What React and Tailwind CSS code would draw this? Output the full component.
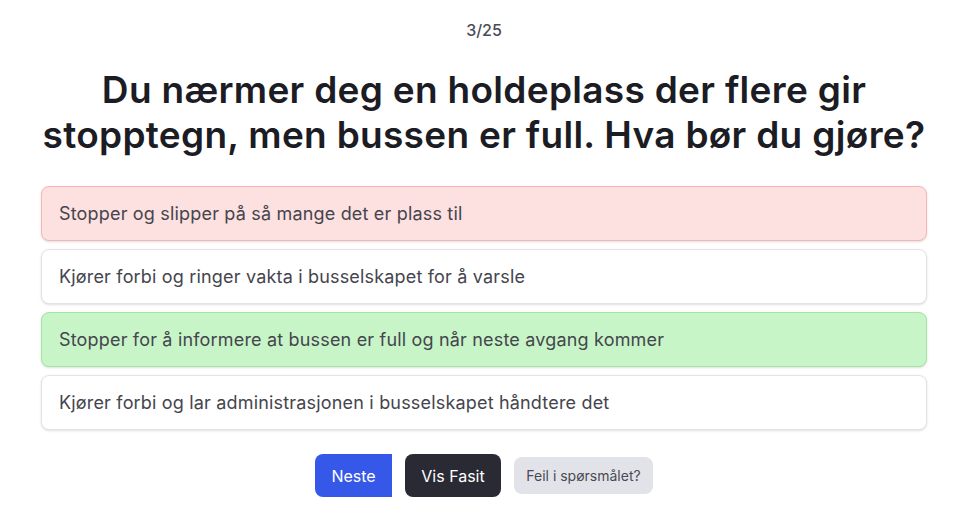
const options = [
  { text: 'Stopper og slipper på så mange det er plass til', state: 'wrong' },
  { text: 'Kjører forbi og ringer vakta i busselskapet for å varsle', state: 'none' },
  { text: 'Stopper for å informere at bussen er full og når neste avgang kommer', state: 'right' },
  { text: 'Kjører forbi og lar administrasjonen i busselskapet håndtere det', state: 'none' },
];

const stateClass = {
  wrong: 'bg-[#fde0e0] border-[#f9b4b4]',
  right: 'bg-[#c7f5c7] border-[#a3e4a3]',
  none: 'bg-white border-[#e4e4e7]',
};

export default function App() {
  return (
    <div className="min-h-screen bg-white font-['Inter',sans-serif]">
      <div className="w-[886px] mx-auto pt-[18px] flex flex-col items-center">
        <div className="text-base leading-6 font-medium text-[#4a4a58]">3/25</div>
        <h1 className="mt-[25px] text-center text-[37px] leading-[45px] font-semibold text-[#1c1c24] tracking-[0.3px] whitespace-nowrap">
          Du nærmer deg en holdeplass der flere gir<br />stopptegn, men bussen er full. Hva bør du gjøre?
        </h1>
        <div className="mt-[29px] w-full flex flex-col gap-2">
          {options.map((o) => (
            <div
              key={o.text}
              className={`h-[55px] flex items-center px-[17px] rounded-lg border shadow-sm text-lg tracking-[0.18px] text-[#45454d] ${stateClass[o.state]}`}
            >
              {o.text}
            </div>
          ))}
        </div>
        <div className="mt-6 flex items-center">
          <button className="h-[43px] w-[77px] rounded-l-lg bg-[#3558e8] text-white text-base">Neste</button>
          <button className="ml-[13px] h-[43px] w-[96px] rounded-lg bg-[#2a2a35] text-white text-base">Vis Fasit</button>
          <button className="ml-[13px] h-[37px] w-[139px] rounded-lg bg-[#e2e3e8] text-[#4a4a55] text-sm">Feil i spørsmålet?</button>
        </div>
      </div>
    </div>
  );
}
